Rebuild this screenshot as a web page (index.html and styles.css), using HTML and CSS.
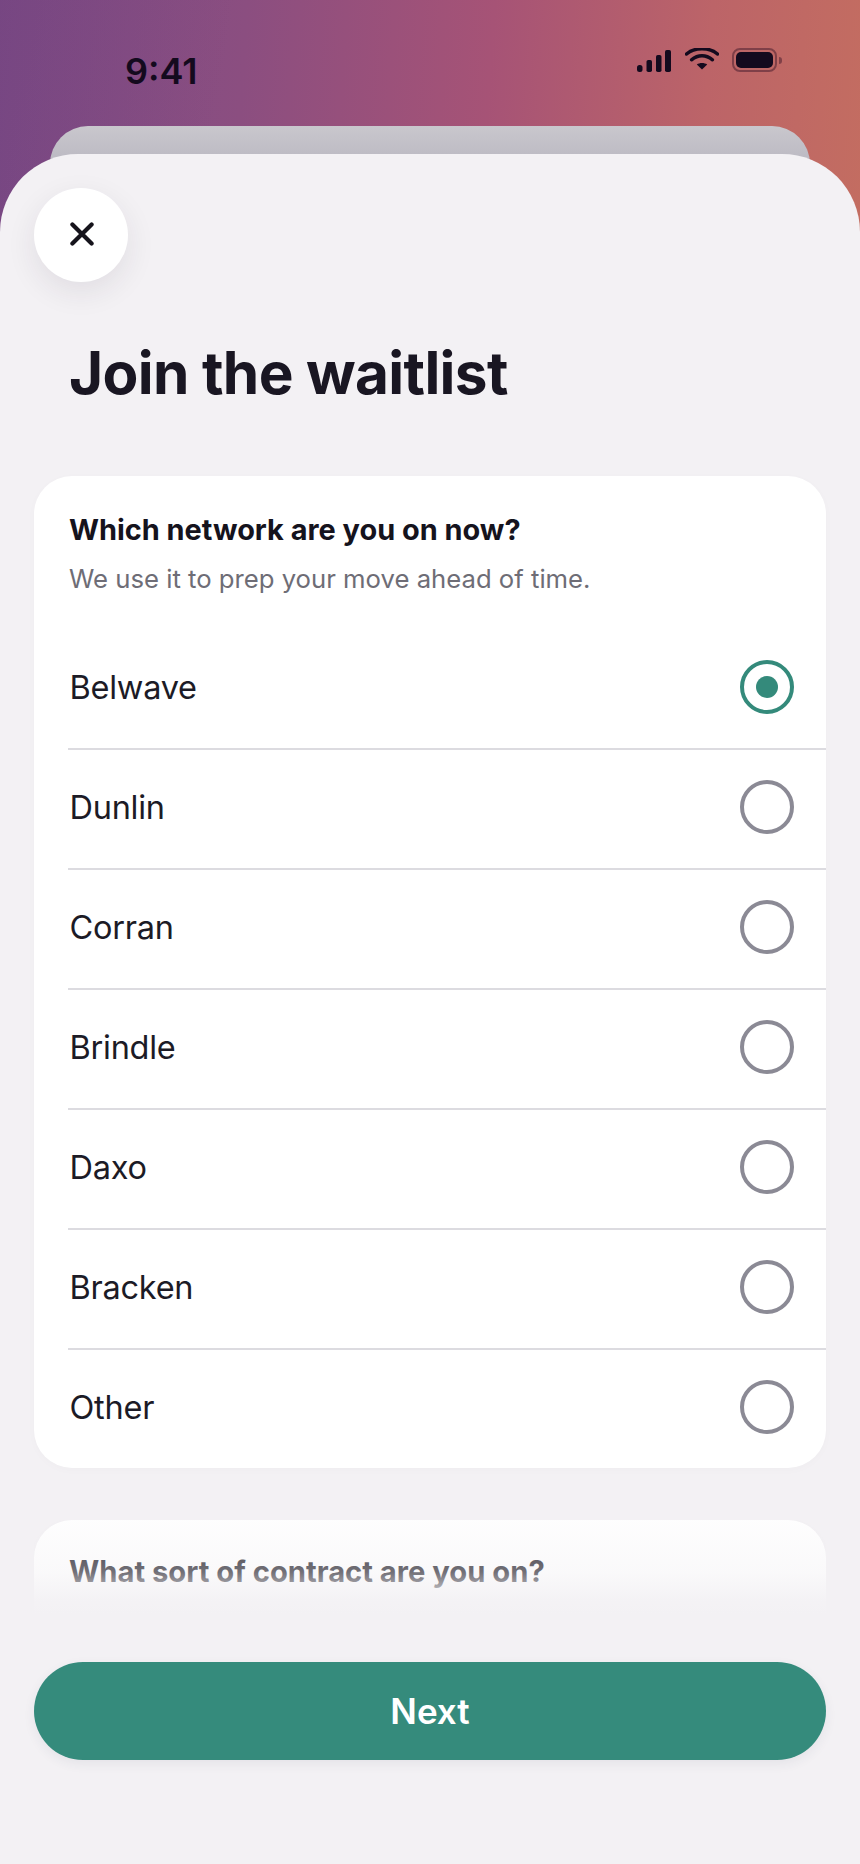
FILE: index.html
```html
<!DOCTYPE html>
<html lang="en">
<head>
<meta charset="utf-8">
<title>Join the waitlist</title>
<link rel="stylesheet" href="styles.css">
</head>
<body>
<div class="screen">
  <header class="status">
    <span class="time">9:41</span>
    <div class="status-icons">
      <svg class="signal" width="34" height="22" viewBox="0 0 34 22"><rect x="0" y="15" width="5.5" height="7" rx="2.5"/><rect x="9.5" y="10" width="5.5" height="12" rx="1.8"/><rect x="19" y="5" width="5.5" height="17" rx="1.8"/><rect x="28" y="0" width="6" height="22" rx="1.8"/></svg>
      <svg class="wifi" width="34" height="22" viewBox="0 0 34 22"><path d="M1.5 6 C6 2 11 0.8 17 0.8 C23 0.8 28 2 32.5 6" fill="none" stroke="#140a1e" stroke-width="3.4" stroke-linecap="round"/><path d="M6.5 11.8 C10 9 13.2 7.8 17 7.8 C20.8 7.8 24 9 27.5 11.8" fill="none" stroke="#140a1e" stroke-width="3.4" stroke-linecap="round"/><path d="M11.8 16.4 C13.3 15.4 15 14.9 17 14.9 C19 14.9 20.7 15.4 22.2 16.4 L17 21.4 Z" fill="#140a1e"/></svg>
      <div class="battery"><div class="battery-body"><div class="battery-fill"></div></div><div class="battery-nub"></div></div>
    </div>
  </header>
  <div class="back-sheet"></div>
  <main class="sheet">
    <button class="close" aria-label="Close">
      <svg class="close-icon" width="24" height="24" viewBox="0 0 24 24"><path d="M2.4 2.4 L21.6 21.6 M21.6 2.4 L2.4 21.6" fill="none" stroke="#16141c" stroke-width="4.2" stroke-linecap="round"/></svg>
    </button>
    <h1 class="title">Join the waitlist</h1>
    <section class="card card-main">
      <h2 class="card-title">Which network are you on now?</h2>
      <p class="card-sub">We use it to prep your move ahead of time.</p>
      <ul class="options">
        <li class="option"><span>Belwave</span><i class="radio radio-on"></i></li>
        <li class="option"><span>Dunlin</span><i class="radio"></i></li>
        <li class="option"><span>Corran</span><i class="radio"></i></li>
        <li class="option"><span>Brindle</span><i class="radio"></i></li>
        <li class="option"><span>Daxo</span><i class="radio"></i></li>
        <li class="option"><span>Bracken</span><i class="radio"></i></li>
        <li class="option"><span>Other</span><i class="radio"></i></li>
      </ul>
    </section>
    <div class="peek">
      <section class="card card-next">
        <h2 class="card-title">What sort of contract are you on?</h2>
      </section>
      <div class="fade"></div>
    </div>
    <button class="next">Next</button>
  </main>
</div>
</body>
</html>
```
FILE: styles.css
```css
* { box-sizing: border-box; }
html, body { margin: 0; padding: 0; }
body { font-family: Inter, "Liberation Sans", sans-serif; background: #f3f1f4; }
.screen {
  width: 860px; height: 1864px; overflow: hidden;
  background:
    linear-gradient(100deg, rgba(100,50,110,.22) 0%, rgba(100,50,110,0) 20%),
    linear-gradient(94deg, #7c4c88 0%, #8b4e80 25%, #a65376 50%, #bc6468 72%, #c8735c 100%);
}
.status {
  height: 126px; padding: 54px 0 0 125px;
  display: flex; justify-content: space-between; align-items: flex-start;
}
.time { font-size: 36px; line-height: 34px; font-weight: 600; color: #140a1e; }
.status-icons { display: flex; align-items: flex-start; gap: 14px; margin: -6px 78px 0 0; }
.signal { margin-top: 2px; fill: #140a1e; }
.wifi { margin-top: 0; }
.battery { display: flex; align-items: center; margin-left: -1px; }
.battery-body { width: 45px; height: 24px; border: 2px solid rgba(40,10,30,.42); border-radius: 8px; padding: 2px; }
.battery-fill { width: 100%; height: 100%; border-radius: 5px; background: #140a1e; }
.battery-nub { width: 3px; height: 7px; margin-left: 2px; border-radius: 0 3px 3px 0; background: rgba(40,10,30,.42); }
.back-sheet {
  width: 760px; height: 60px; margin-left: 50px;
  border-radius: 38px 38px 0 0;
  background: linear-gradient(180deg, #c9c7cd, #bbb9c2 60%);
}
.sheet {
  position: relative; margin-top: -32px; height: 1710px;
  padding: 34px 34px 0; background: #f3f1f4;
  border-radius: 78px 78px 0 0;
}
.close {
  display: flex; align-items: center; justify-content: center;
  width: 94px; height: 94px; padding: 0; border: 0; border-radius: 50%;
  background: #fff; box-shadow: 0 10px 30px rgba(40,30,60,.09);
}
.close-icon { margin: -2px 0 0 1px; }
.title {
  margin: 58px 0 0 35px; font-size: 58.5px; line-height: 66px;
  font-weight: 700; color: #191622; letter-spacing: -.65px;
}
.card {
  background: #fff; border-radius: 38px;
  box-shadow: 0 2px 10px rgba(40,30,60,.02);
}
.card-main { margin-top: 70px; padding: 36px 0 0 35px; height: 992px; }
.card-title { margin: 0; font-size: 28.9px; line-height: 36px; font-weight: 700; color: #15131d; }
.card-sub { margin: 13px 0 0; font-size: 25.7px; line-height: 36px; font-weight: 400; color: #6e6d76; }
.options { list-style: none; margin: 33px 0 0 -1px; padding: 0; }
.option {
  display: flex; align-items: center; justify-content: space-between;
  height: 120px; padding: 0 32px 4px 1.5px;
  border-bottom: 2px solid #dcdbe0;
  font-size: 32.5px; letter-spacing: -.25px; color: #1c1b26;
}
.option:last-child { border-bottom: 0; height: 118px; }
.radio { display: block; width: 54px; height: 54px; border: 4px solid #8b8a95; border-radius: 50%; }
.radio-on { border-color: #348a7b; display: flex; align-items: center; justify-content: center; }
.radio-on::after { content: ""; width: 22px; height: 22px; border-radius: 50%; background: #348a7b; }
.peek { position: relative; margin-top: 52px; height: 95px; overflow: hidden; }
.card-next { height: 200px; padding: 34px 35px 0; }
.card-next .card-title { font-size: 29.2px; }
.fade {
  position: absolute; left: -10px; right: -10px; top: 0; bottom: 0;
  background: linear-gradient(180deg, rgba(243,241,244,.1) 0%, rgba(243,241,244,.42) 55%, rgba(243,241,244,.9) 84%, #f3f1f4 100%);
}
.next {
  display: block; width: 792px; height: 98px; margin-top: 47px; padding: 0; border: 0;
  border-radius: 49px; background: #358b7c; color: #fff;
  font: 600 35px/1 Inter, "Liberation Sans", sans-serif;
  box-shadow: 0 4px 12px rgba(40,50,90,.07);
}
```
